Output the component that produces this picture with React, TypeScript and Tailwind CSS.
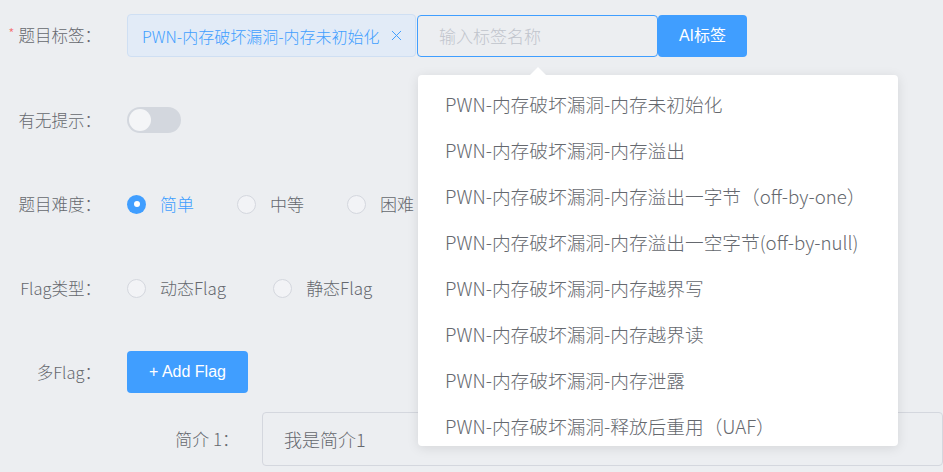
import { X } from 'lucide-react';

const options = [
  'PWN-内存破坏漏洞-内存未初始化',
  'PWN-内存破坏漏洞-内存溢出',
  'PWN-内存破坏漏洞-内存溢出一字节（off-by-one）',
  'PWN-内存破坏漏洞-内存溢出一空字节(off-by-null)',
  'PWN-内存破坏漏洞-内存越界写',
  'PWN-内存破坏漏洞-内存越界读',
  'PWN-内存破坏漏洞-内存泄露',
  'PWN-内存破坏漏洞-释放后重用（UAF）',
];

function Label({ text, required }: { text: string; required?: boolean }) {
  return (
    <div className="flex w-[127px] shrink-0 items-center justify-end pr-[26px] text-[16.5px] font-light text-[#65686e]">
      {required && <span className="mr-[4px] -translate-y-[2px] text-[14px] text-[#f56c6c]">*</span>}
      {text}
    </div>
  );
}

function Radio({ label, checked }: { label: string; checked?: boolean }) {
  return (
    <div className="flex items-center">
      {checked ? (
        <span className="flex h-[19px] w-[19px] items-center justify-center rounded-full bg-[#409eff]">
          <span className="h-[6px] w-[6px] rounded-full bg-white" />
        </span>
      ) : (
        <span className="h-[19px] w-[19px] rounded-full border border-[#d4d7de] bg-[#f2f3f6]" />
      )}
      <span className={`ml-[14px] text-[17px] font-light ${checked ? 'text-[#409eff]' : 'text-[#65686e]'}`}>{label}</span>
    </div>
  );
}

export default function App() {
  return (
    <div
      className="h-[472px] w-[943px] overflow-hidden bg-[#eceef1] pt-[14px]"
      style={{ fontFamily: '"Noto Sans CJK SC", "Noto Sans", sans-serif' }}
    >
      <div className="flex flex-col gap-[42px]">
        {/* 题目标签 */}
        <div className="flex h-[43px] items-center">
          <Label text="题目标签：" required />
          <div className="flex h-[43px] w-[289px] items-center justify-between rounded-[4px] border border-[#cfdff3] bg-[#e2ebf7] pl-[14px] pr-[10px] text-[16px] font-light text-[#409eff]">
            <span>PWN-内存破坏漏洞-内存未初始化</span>
            <X size={17} strokeWidth={1.4} />
          </div>
          <div className="relative ml-[1px]">
            <div className="flex h-[42px] w-[241px] items-center rounded-[4px] border border-[#409eff] pl-[21px] text-[17px] font-light text-[#c0c4cc]">
              输入标签名称
            </div>
            <div className="absolute left-[1px] top-[60px] z-10">
              <div className="absolute left-[111px] top-[-8px] h-0 w-0 border-x-[9px] border-b-[9px] border-x-transparent border-b-white" />
              <div className="h-[371px] w-[480px] overflow-hidden rounded-[4px] bg-white pt-[7px] shadow-[0_2px_12px_rgba(0,0,0,0.1)]">
                {options.map((o) => (
                  <div key={o} className="flex h-[46px] items-center pl-[27px] text-[18.7px] font-light text-[#65686e]">
                    {o}
                  </div>
                ))}
              </div>
            </div>
          </div>
          <button
            className="flex h-[42px] w-[89px] items-center justify-center rounded-[4px] bg-[#409eff] text-[16px] text-white"
            style={{ fontFamily: '"Liberation Sans", "Noto Sans CJK SC", sans-serif' }}
          >
            AI标签
          </button>
        </div>

        {/* 有无提示 */}
        <div className="flex h-[42px] items-center">
          <Label text="有无提示：" />
          <div className="flex h-[26px] w-[54px] items-center rounded-full bg-[#d3d7de] px-[2px]">
            <span className="h-[22px] w-[22px] rounded-full bg-[#f4f5f7]" />
          </div>
        </div>

        {/* 题目难度 */}
        <div className="flex h-[42px] items-center">
          <Label text="题目难度：" />
          <div className="flex items-center gap-[43px]">
            <Radio label="简单" checked />
            <Radio label="中等" />
            <Radio label="困难" />
          </div>
        </div>

        {/* Flag类型 */}
        <div className="flex h-[42px] items-center">
          <Label text="Flag类型：" />
          <div className="flex items-center gap-[47px]">
            <Radio label="动态Flag" />
            <Radio label="静态Flag" />
          </div>
        </div>

        {/* 多Flag */}
        <div className="flex h-[42px] items-center">
          <Label text="多Flag：" />
          <button
            className="flex h-[42px] w-[121px] items-center justify-center rounded-[4px] bg-[#409eff] text-[16px] text-white"
            style={{ fontFamily: '"Liberation Sans", sans-serif' }}
          >
            + Add Flag
          </button>
        </div>
      </div>

      {/* 简介 */}
      <div className="mt-[19px] flex h-[54px] items-center pl-[127px]">
        <div className="w-[112px] shrink-0 text-right text-[17px] font-light text-[#65686e]">简介 1：</div>
        <div className="ml-[23px] flex h-[54px] flex-1 items-center rounded-[4px] border border-[#d4d7de] pl-[21px] text-[18px] font-light text-[#65686e]">
          我是简介1
        </div>
      </div>
    </div>
  );
}
